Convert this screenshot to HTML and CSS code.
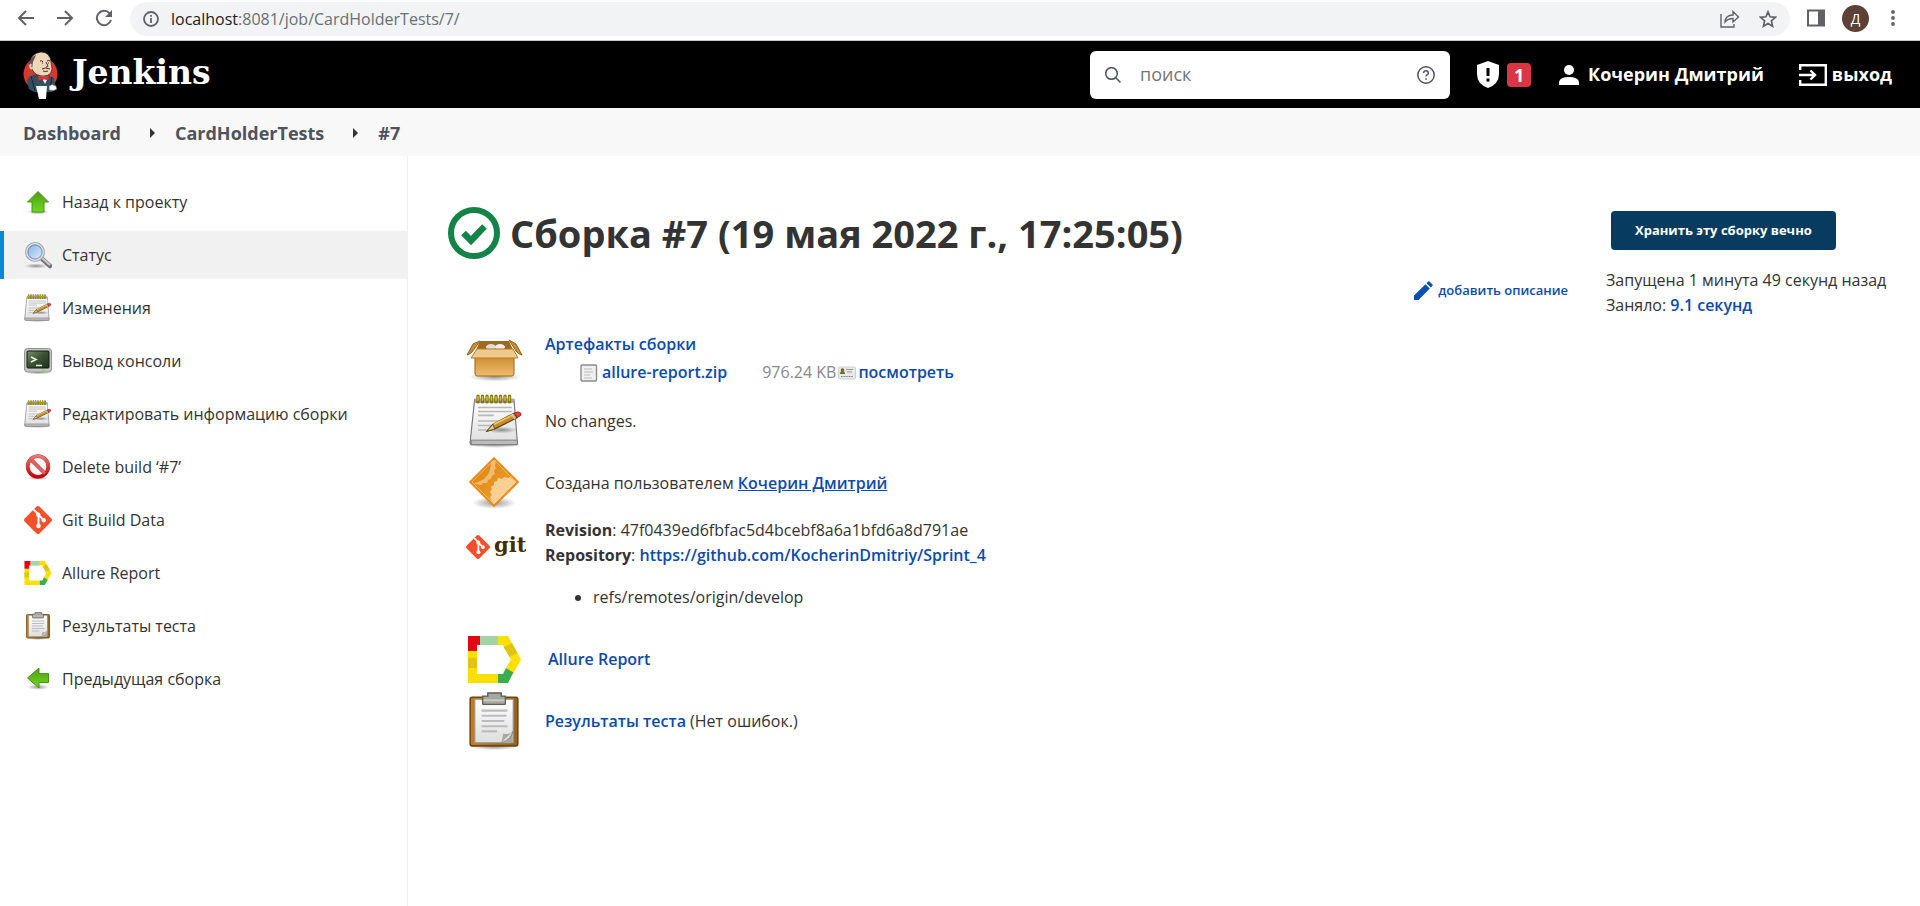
FILE: index.html
```html
<!DOCTYPE html>
<html lang="ru">
<head>
<meta charset="utf-8">
<title>CardHolderTests #7 [Jenkins]</title>
<link rel="stylesheet" href="styles.css">
</head>
<body>
<svg class="defs" width="0" height="0" aria-hidden="true">
  <defs>
    <linearGradient id="paper" x1="0" y1="0" x2="0" y2="1"><stop offset="0" stop-color="#fff"/><stop offset="1" stop-color="#dedede"/></linearGradient>
    <linearGradient id="green" x1="0" y1="0" x2="0" y2="1"><stop offset="0" stop-color="#4f9a16"/><stop offset="1" stop-color="#6edb1c"/></linearGradient>
    <linearGradient id="screen" x1="0" y1="0" x2="1" y2="1"><stop offset="0" stop-color="#78906a"/><stop offset=".5" stop-color="#3a5232"/><stop offset="1" stop-color="#1c2e18"/></linearGradient>
    <linearGradient id="carton" x1="0" y1="0" x2="0" y2="1"><stop offset="0" stop-color="#c98a2e"/><stop offset="1" stop-color="#f0bd6e"/></linearGradient>
    <linearGradient id="amber" x1="0" y1="0" x2="1" y2="1"><stop offset="0" stop-color="#da8208"/><stop offset="1" stop-color="#f0a63c"/></linearGradient>
    <linearGradient id="board" x1="0" y1="0" x2="1" y2="0"><stop offset="0" stop-color="#c27e22"/><stop offset="1" stop-color="#94631c"/></linearGradient>
    <linearGradient id="glass" x1="0" y1="0" x2="1" y2="1"><stop offset="0" stop-color="#7eaae0"/><stop offset="1" stop-color="#e8f3ff"/></linearGradient>
    <linearGradient id="ban" x1="0" y1="0" x2="0" y2="1"><stop offset="0" stop-color="#e77676"/><stop offset="1" stop-color="#c80000"/></linearGradient>
    <radialGradient id="shade"><stop offset="0" stop-color="#000" stop-opacity=".4"/><stop offset="1" stop-color="#000" stop-opacity="0"/></radialGradient>
    <symbol id="i-notepad" viewBox="0 0 48 48">
      <ellipse cx="23" cy="45" rx="24" ry="3" fill="url(#shade)"/>
      <path d="M5 5h35l3 38q0 2-2 2H3q-2 0-2-2z" fill="url(#paper)" stroke="#777"/>
      <path d="M2 41h41v4H2z" fill="#bbb" stroke="#777" stroke-width=".8"/>
      <path d="M5 4h35v4H5z" fill="#aaa"/>
      <path d="M8 12h30M8 15.500h30M8 19h14M8 24h26M8 28h16M8 32h12" stroke="#b8b8b8" stroke-width="1.400"/>
      <path d="M8 2v5M12 2v5M16 2v5M20 2v5M24 2v5M28 2v5M32 2v5M36 2v5" stroke="#857713" stroke-width="3" stroke-linecap="round"/>
      <path d="M8 2v4M12 2v4M16 2v4M20 2v4M24 2v4M28 2v4M32 2v4M36 2v4" stroke="#ddc63b" stroke-width="1.200"/>
      <ellipse cx="29" cy="32" rx="14" ry="3" fill="url(#shade)"/>
      <path d="M16 33l5-6 19-10 3 4-20 10z" fill="#c68a2b" stroke="#5f4008"/>
      <path d="M22 27l18-9" stroke="#edc363" stroke-width="1.500"/>
      <path d="M16 33l5-6 2 4z" fill="#e5cf9b" stroke="#5f4008" stroke-width=".7"/>
      <path d="M40 17l3-1q4 0 3 3l-3 2z" fill="#ef3b3b" stroke="#8c2020" stroke-width=".8"/>
      <path d="M38 18l3 4" stroke="#ccc" stroke-width="1.500"/>
    </symbol>
    <symbol id="i-clip" viewBox="0 0 48 56">
      <ellipse cx="24" cy="53" rx="24" ry="3" fill="url(#shade)"/>
      <rect x="1" y="5" width="46" height="47" rx="2" fill="url(#board)" stroke="#70460c" stroke-width="1.500"/>
      <rect x="5.500" y="7" width="37" height="42" fill="url(#paper)" stroke="#999"/>
      <path d="M12 18h25M12 23h24M12 28h22M12 33h25M12 38h15" stroke="#bcbcbc" stroke-width="2"/>
      <path d="M31 49l2-9q5 2 9-2v11z" fill="#a8a8a4"/><path d="M31 49q10-3 11-11" fill="#dfdfdc" stroke="#888"/>
      <path d="M18 4V1h13v3h4v7q0 1-1 1H14q-1 0-1-1V4z" fill="#a6a89f" stroke="#5c5e58" stroke-width="1.300"/>
      <path d="M14 8h20" stroke="#c8cac1" stroke-width="2"/>
    </symbol>
    <symbol id="i-gitmark" viewBox="0 0 28 28">
      <path d="M14 0q.8 0 1.500.6l11.900 11.900q1.200 1.500 0 3L15.500 27.400q-1.500 1.200-3 0L.6 15.500q-1.200-1.500 0-3L12.500.6Q13.200 0 14 0z" fill="#f4502c"/>
      <path d="M9.500 3.500l5 5v12M14.500 9l5 5" stroke="#fff" stroke-width="2" fill="none"/>
      <circle cx="14.300" cy="8.700" r="2.200" fill="#fff"/><circle cx="14.500" cy="20" r="2.300" fill="#fff"/><circle cx="19.700" cy="14.200" r="2.200" fill="#fff"/>
    </symbol>
    <symbol id="i-allure" viewBox="0 0 53 47">
      <path d="M0 15h9v23h21v9H0z" fill="#ffdf00"/><path d="M0 22h9v10H0z" fill="#dfc411"/>
      <path d="M0 0h12v9H9v6H0z" fill="#e30613"/><path d="M12 0h18v9H12z" fill="#a5d2a8"/>
      <path d="M30 0h10l13 23.500L45.500 37 38 32l5-8.500L35 9h-5z" fill="#ffdf00"/>
      <path d="M44 7l5.500 10-8 4-6-10z" fill="#dfc411"/>
      <path d="M38 32l7.500 4.500L40 47H30v-9h5z" fill="#3cad4b"/>
    </symbol>
  </defs>
</svg>

<div class="browser">
  <button class="tool" aria-label="Back"><svg width="18" height="18" viewBox="0 0 18 18"><path d="M17 9H2M9 2L2 9l7 7" class="line"/></svg></button>
  <button class="tool" aria-label="Forward"><svg width="18" height="18" viewBox="0 0 18 18"><path d="M1 9h15M9 2l7 7-7 7" class="line"/></svg></button>
  <button class="tool" aria-label="Reload"><svg width="18" height="18" viewBox="0 0 18 18"><path d="M14.500 4.200A7.200 7.200 0 1 0 16 11" class="line"/><path d="M17 1v7h-7z" fill="#5f6368"/></svg></button>
  <div class="omnibox">
    <svg width="16" height="16" viewBox="0 0 16 16"><circle cx="8" cy="8" r="7" fill="none" stroke="#5f6368" stroke-width="1.800"/><path d="M8 7v5M8 4v1.800" stroke="#5f6368" stroke-width="1.800"/></svg>
    <span class="url"><span class="host">localhost</span>:8081/job/CardHolderTests/7/</span>
    <button class="tool" aria-label="Share"><svg width="20" height="18" viewBox="0 0 20 18"><path d="M1 4v13h13v-3M5 12q.5-7 8-7V1.500L18.500 7 13 12V8.500Q8 8.500 5 12z" fill="none" stroke="#5f6368" stroke-width="1.400"/></svg></button>
    <button class="tool" aria-label="Bookmark"><svg width="18" height="18" viewBox="0 0 18 18"><path d="M9 1.800l2.100 5 5.400.5-4.100 3.600 1.200 5.300L9 13.400l-4.600 2.800 1.200-5.300L1.500 7.300l5.400-.5z" fill="none" stroke="#5f6368" stroke-width="1.700"/></svg></button>
  </div>
  <button class="tool panel" aria-label="Side panel"><svg width="18" height="18" viewBox="0 0 18 18"><path d="M1 1.500h16v15H1z" fill="none" stroke="#5f6368" stroke-width="2"/><path d="M11 1h7v16h-7z" fill="#5f6368"/></svg></button>
  <button class="avatar">Д</button>
  <button class="tool" aria-label="Menu"><svg width="18" height="18" viewBox="0 0 18 18" fill="#5f6368"><circle cx="9" cy="3" r="1.900"/><circle cx="9" cy="9" r="1.900"/><circle cx="9" cy="15" r="1.900"/></svg></button>
</div>

<header class="header">
  <a class="logo" href="#">
    <svg width="35" height="48" viewBox="0 0 35 48">
      <circle cx="17.500" cy="23" r="17" fill="#d33833"/>
      <path d="M6 26l7-3 12 1 6 3 2 10-4 4H11l-5-3-2-8z" fill="#335061"/>
      <path d="M8 25l4 15M29 26l-2 12" stroke="#17262f"/>
      <path d="M17 24l5 9 4-8z" fill="#e9eef1"/>
      <path d="M7 13Q8 2 18 1q9 0 10 10l1 7q-1 7-8 7-8 0-11-5l-1-2q-4-2-2-5z" fill="#f0d6b7" stroke="#2a2420" stroke-width=".7"/>
      <path d="M7 14Q6 7 13 4q-2 5-3 7l-1 7q-3-2-2-4z" fill="#5c5456"/>
      <path d="M8 13q-2 3 1 5" fill="none" stroke="#f0d6b7" stroke-width="2"/>
      <path d="M17 10q2-1 3 1M24 10q2-1 3 0M23 11l2 4q0 1-2 1M19 18q3-2 8 0M20 20q3 1 5 0M19 12h1M25 12h1" fill="none" stroke="#3b2c28" stroke-width="1"/>
      <path d="M15 24l5 2 6-2v5l-5-1-6 2z" fill="#d33833" stroke="#81201d" stroke-width=".5"/>
      <path d="M13 35h11l-1 13h-7z" fill="#fff"/>
      <path d="M26 35q3-3 7 0l1 3q-3 3-8 1z" fill="#fff" stroke="#444" stroke-width=".6"/>
    </svg>
    <span class="brand">Jenkins</span>
  </a>
  <form class="search">
    <svg width="16" height="16" viewBox="0 0 16 16"><circle cx="6.500" cy="6.500" r="5.800" class="thin"/><path d="M10.800 10.800L15.500 15.500" class="thin"/></svg>
    <input type="text" aria-label="поиск" placeholder="поиск">
    <a href="#" class="help" aria-label="Help"><svg width="18" height="18" viewBox="0 0 18 18"><circle cx="9" cy="9" r="8.200" class="thin"/><path d="M6.600 7q.1-2.200 2.400-2.200T11.400 7q0 1.200-1.400 1.900-1 .6-1 1.600M9 12.200v1.600" class="thin"/></svg></a>
  </form>
  <a class="alerts" href="#" aria-label="Предупреждения: 1">
    <svg width="22" height="27" viewBox="0 0 22 27"><path d="M11 0l11 4v9q0 10-11 14Q0 23 0 13V4z" fill="#fff"/><path d="M11 7v8M11 17.500v3" stroke="#000" stroke-width="3"/></svg>
    <span class="badge">1</span>
  </a>
  <a class="user" href="#">
    <svg width="20" height="20" viewBox="0 0 20 20" fill="#fff"><circle cx="10" cy="5" r="5"/><path d="M0 20v-3q1-5 10-5t10 5v3z"/></svg>
    <span>Кочерин Дмитрий</span>
  </a>
  <a class="logout" href="#">
    <svg width="28" height="22" viewBox="0 0 28 22" fill="none" stroke="#fff" stroke-width="2.400"><path d="M1.200 6V1.200h25.600v19.600H1.200V16M0 11h16M11.500 6.500L16 11l-4.500 4.500"/></svg>
    <span>выход</span>
  </a>
</header>

<nav class="crumbs">
  <a href="#">Dashboard</a><i class="sep"></i><a href="#">CardHolderTests</a><i class="sep"></i><a href="#">#7</a>
</nav>

<div class="page">
  <nav class="side">
    <a href="#"><svg width="28" height="28" viewBox="0 0 28 28"><ellipse cx="14" cy="24" rx="11" ry="2.500" fill="url(#shade)"/><path d="M14 3.500L24.500 14H20v10H8V14H3.500z" fill="url(#green)" stroke="#4a9414"/></svg>Назад к проекту</a>
    <a href="#" class="active"><svg width="28" height="28" viewBox="0 0 28 28"><ellipse cx="12" cy="25" rx="12" ry="2.500" fill="url(#shade)"/><path d="M17 17l9 8" stroke="#777" stroke-width="4.500" stroke-linecap="round"/><path d="M18 17l8 7" stroke="#ccc" stroke-width="2"/><circle cx="11" cy="11" r="8.800" fill="url(#glass)" stroke="#aaa" stroke-width="2.400"/><circle cx="11" cy="11" r="8.300" fill="none" stroke="#f2f2f2"/><circle cx="11" cy="11" r="7" fill="none" stroke="#5a87c4" stroke-width=".8"/></svg>Статус</a>
    <a href="#"><svg width="28" height="28"><use href="#i-notepad"/></svg>Изменения</a>
    <a href="#"><svg width="28" height="28" viewBox="0 0 28 28"><ellipse cx="14" cy="25.500" rx="13" ry="2" fill="url(#shade)"/><rect x=".5" y="1.500" width="27" height="23.500" rx="3" fill="#c5c6c2" stroke="#929390"/><rect x="3" y="4" width="22" height="17" rx="1" fill="url(#screen)" stroke="#10180e"/><path d="M7 10l5 2.500L7 15M12 18.500h6" stroke="#e8efe4" stroke-width="1.600" fill="none"/><path d="M18 23h3" stroke="#8ae234"/></svg>Вывод консоли</a>
    <a href="#"><svg width="28" height="28"><use href="#i-notepad"/></svg>Редактировать информацию сборки</a>
    <a href="#"><svg width="28" height="28" viewBox="0 0 28 28"><ellipse cx="14" cy="25" rx="11" ry="2" fill="url(#shade)"/><circle cx="14" cy="13.500" r="10.300" fill="#fbf4f4" stroke="#b84040" stroke-width="3.800"/><path d="M7 6.500l14 14" stroke="#b84040" stroke-width="3.800"/><circle cx="14" cy="13.500" r="10.300" fill="none" stroke="url(#ban)" stroke-width="2.800"/><path d="M7 6.500l14 14" stroke="#e26060" stroke-width="2.800"/></svg>Delete build ‘#7’</a>
    <a href="#"><svg width="28" height="28"><use href="#i-gitmark"/></svg>Git Build Data</a>
    <a href="#"><svg width="28" height="24"><use href="#i-allure"/></svg>Allure Report</a>
    <a href="#"><svg width="28" height="28"><use href="#i-clip"/></svg>Результаты теста</a>
    <a href="#"><svg width="28" height="28" viewBox="0 0 28 28"><ellipse cx="14" cy="22" rx="11" ry="3" fill="url(#shade)"/><path d="M3.500 13L15 3v5.500h9.500v9H15V23z" fill="url(#green)" stroke="#4a9414"/></svg>Предыдущая сборка</a>
  </nav>

  <main class="main">
    <div class="content">
      <h1><svg width="52" height="52" viewBox="0 0 52 52"><circle cx="26" cy="26" r="23" fill="none" stroke="#138347" stroke-width="6"/><path d="M15.500 26l7.500 7.500 13.500-14" fill="none" stroke="#138347" stroke-width="6.500"/></svg>Сборка #7 (19 мая 2022 г., 17:25:05)</h1>
      <a class="describe" href="#"><svg width="20" height="20" viewBox="0 0 20 20" fill="#0b4fb5"><path d="M1 19v-4.500L12.500 3.200l4.300 4.300L5.500 19zM13.500 2.200l1.600-1.600q.7-.6 1.400 0l3 3q.5.600 0 1.200l-1.700 1.700z"/></svg>добавить описание</a>

      <section class="row artifacts">
        <svg width="57" height="42" viewBox="0 0 57 42">
          <ellipse cx="29" cy="38" rx="26" ry="4.500" fill="url(#shade)"/>
          <path d="M14 2h29l5 11H9z" fill="#9c6a20"/><ellipse cx="25" cy="8" rx="5" ry="3" fill="#ddd"/><ellipse cx="34" cy="8" rx="5" ry="3" fill="#eee"/>
          <path d="M9 16h39v18q0 3-2 3H11q-2 0-2-3z" fill="url(#carton)" stroke="#9a6413"/>
          <path d="M11 10h36l5 9H5z" fill="#f0c98e" stroke="#b97b24"/>
          <path d="M14 2L7 5 1 16q3-1 5-3zM43 1l7 4 6 11q-4-1-6-4z" fill="#c98c34" stroke="#94611a"/>
        </svg>
        <div class="stack">
          <a href="#">Артефакты сборки</a>
          <div class="file">
            <span class="pair"><svg width="18" height="18" viewBox="0 0 18 18"><rect x="1" y="1" width="15.500" height="16" rx="1" fill="#f0f0f0" stroke="#8b8b8b" stroke-width="1.400"/><path d="M4 5h8M4 8h9M4 11h6M4 14h8" stroke="#bbb"/></svg><a href="#">allure-report.zip</a></span>
            <span class="pair view"><span class="size">976.24 KB</span><svg width="18" height="14" viewBox="0 0 18 14"><rect x=".5" y="1" width="17" height="12" rx="1" fill="#e8e8e8" stroke="#d0d0d0"/><circle cx="4.500" cy="4" r="1.800" fill="#8a5a25"/><path d="M2 8q0-3 2.500-3T7 8z" fill="#597a1c"/><path d="M8 3.500h7M9 6h5" stroke="#999"/><path d="M3 10.500h12" stroke="#777" stroke-dasharray="1 .6"/></svg><a href="#">посмотреть</a></span>
          </div>
        </div>
      </section>
      <section class="row">
        <svg width="54" height="54"><use href="#i-notepad"/></svg>
        <div>No changes.</div>
      </section>
      <section class="row">
        <svg width="50" height="52" viewBox="0 0 50 52">
          <ellipse cx="25" cy="46" rx="22" ry="6" fill="url(#shade)"/>
          <path d="M25 1L49 25 25 49 1 25z" fill="url(#amber)" stroke="#f08519" stroke-width="1.600"/>
          <path d="M22 43l-1-3 2-2-2-3 2-3-1-2 3-2 0-3 3-1 1-3 4 1 2-2 4 1 2-1 6 5-22 22z" fill="#f9d093"/>
          <path d="M22 5l3-2 2 1-1 5 1 2-2 3 1 3-3 2-1 3-3 1-1 3-4 0-2 2-5-1 -2-1q17-3 17-21z" fill="#eebb70"/>
          <path d="M25 3l22 22-22 22L3 25z" fill="none" stroke="#fbd79f" stroke-opacity=".55"/>
        </svg>
        <div>Создана пользователем <a class="person" href="#">Кочерин Дмитрий</a></div>
      </section>
      <section class="row git">
        <svg width="60" height="34" viewBox="0 0 60 34"><use href="#i-gitmark" y="4" width="24" height="24"/><text x="28" y="21" class="gitword">git</text></svg>
        <div>
          <div><b>Revision</b>: 47f0439ed6fbfac5d4bcebf8a6a1bfd6a8d791ae</div>
          <div><b>Repository</b>: <a href="#">https://github.com/KocherinDmitriy/Sprint_4</a></div>
          <ul><li>refs/remotes/origin/develop</li></ul>
        </div>
      </section>
      <section class="row allure">
        <svg width="53" height="47"><use href="#i-allure"/></svg>
        <a href="#">Allure Report</a>
      </section>
      <section class="row">
        <svg width="50" height="58"><use href="#i-clip"/></svg>
        <div><a href="#">Результаты теста</a> (Нет ошибок.)</div>
      </section>
    </div>
    <aside class="meta">
      <button class="keep">Хранить эту сборку вечно</button>
      <div>Запущена 1 минута 49 секунд назад</div>
      <div>Заняло: <a href="#">9.1 секунд</a></div>
    </aside>
  </main>
</div>
</body>
</html>
```
FILE: styles.css
```css
* { box-sizing: border-box; }
body {
  margin: 0;
  min-height: 100vh;
  display: flex;
  flex-direction: column;
  background: #fff;
  color: #333;
  font: 16px/25px "Open Sans", "Noto Sans", sans-serif;
}
a { color: #0b4aae; text-decoration: none; font-weight: 600; }
button { border: 0; padding: 0; background: none; font: inherit; }
svg { display: block; flex: none; }
.defs { position: absolute; }
.line { fill: none; stroke: #5f6368; stroke-width: 2; }
.thin { fill: none; stroke: #4d545d; stroke-width: 1.5; }

.browser { display: flex; align-items: center; height: 41px; padding: 0 18px 4px 17px; border-bottom: 1px solid #ccc; }
.browser > .tool { margin-right: 21px; }
.tool { display: flex; }
.omnibox { flex: 1; display: flex; align-items: center; height: 34px; margin: 2px 17px 0 -4px; padding: 0 13px; border-radius: 17px; background: #f1f3f4; }
.url { flex: 1; margin-left: 12px; color: #6b6f73; }
.host { color: #202124; }
.omnibox .tool + .tool { margin-left: 19px; }
.browser > .panel { margin-right: 17px; }
.avatar { width: 27px; height: 27px; margin-right: 15px; border-radius: 50%; background: #5d4037; color: #fff; font-size: 14px; }
.browser > .tool:last-child { margin: 0; }

.header { display: flex; align-items: center; height: 67px; padding: 0 28px 0 23px; background: #000; }
.header a { color: #fff; font-weight: 700; font-size: 18px; }
.logo { display: flex; align-items: center; gap: 14px; margin-right: auto; }
.header .brand { font: 700 33px/40px "DejaVu Serif", serif; padding-bottom: 4px; }
.search { display: flex; align-items: center; width: 360px; height: 48px; padding: 0 15px; border-radius: 6px; background: #fff; }
.search input { flex: 1; min-width: 0; margin-left: 19px; padding: 0; border: 0; outline: 0; font: inherit; font-size: 18px; }
.search input::placeholder { color: #757575; }
.alerts { display: flex; align-items: center; gap: 8px; margin-left: 27px; }
.badge { width: 24px; height: 24px; border-radius: 4px; background: #dc3545; line-height: 24px; text-align: center; }
.user { display: flex; align-items: center; gap: 9px; margin-left: 28px; }
.logout { display: flex; align-items: center; gap: 5px; margin-left: 35px; }

.crumbs { display: flex; align-items: center; height: 48px; padding: 2px 23px 0; background: #f8f8f8; }
.crumbs a { color: #4d545d; font-size: 18px; font-weight: 700; }
.sep { margin: 0 20px 0 29px; border: solid transparent; border-width: 5px 0 5px 5px; border-left-color: #333; }

.page { flex: 1; display: flex; }
.side { display: flex; flex-direction: column; gap: 5px; width: 408px; padding-top: 22px; border-right: 1px solid #f0f0f0; }
.side a { display: flex; align-items: center; gap: 10px; height: 48px; padding-left: 20px; border-left: 4px solid transparent; color: #333; font-weight: 500; }
.side .active { background: #f1f1f1; border-color: #0b87d6; }

.main { flex: 1; display: flex; padding: 49px 40px 0; }
.content { flex: 1; display: flex; flex-direction: column; }
h1 { display: flex; align-items: center; gap: 10px; margin: 0; font-size: 38px; line-height: 56px; font-weight: 700; }
.describe { display: flex; align-items: center; gap: 5px; align-self: flex-end; margin: 17px 0 27px; font-size: 13px; }
.row { display: grid; grid-template-columns: 97px 1fr; align-items: center; min-height: 62px; }
.row > svg { justify-self: start; margin-left: 21px; }
.artifacts { min-height: 60px; }
.artifacts > svg { margin-left: 18px; }
.stack { display: flex; flex-direction: column; align-self: start; gap: 3px; padding-top: 2px; }
.file { display: flex; gap: 35px; padding-left: 35px; }
.pair { display: flex; align-items: center; gap: 4px; }
.view { gap: 2px; }
.size { color: #888; }
.person { text-decoration: underline; }
.git { align-items: start; padding-top: 4px; }
.git > svg { margin: 13px 0 0 18px; }
.gitword { font: 700 21px "DejaVu Serif", serif; fill: #413000; }
.git ul { margin: 17px 0 18px; padding-left: 48px; }
.allure > svg { margin-left: 20px; }
.allure > a { margin-left: 3px; }

.meta { width: 274px; padding-top: 6px; margin-left: 38px; white-space: nowrap; }
.keep { display: block; margin: 0 0 18px 5px; padding: 0 24px; height: 39px; border-radius: 4px; background: #073b5f; color: #fff; font-size: 13px; font-weight: 700; }
```
